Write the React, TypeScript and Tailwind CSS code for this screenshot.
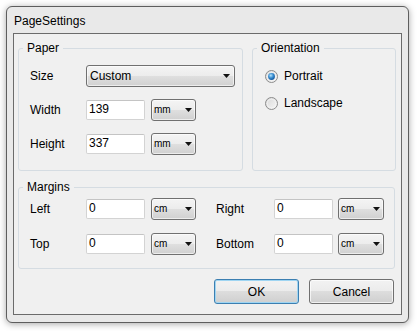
import React from "react";

function Arrow() {
  return (
    <svg width="7" height="4" viewBox="0 0 7 4" className="shrink-0">
      <path d="M0 0 L7 0 L3.5 4 Z" fill="#111" />
    </svg>
  );
}

function Combo({ text, w, small }: { text: string; w: string; small?: boolean }) {
  return (
    <div
      className={`${w} h-[22px] flex items-center justify-between border border-[#707070] rounded-[3px] bg-[linear-gradient(to_bottom,#f4f4f4_0%,#ececec_50%,#dfdfdf_50%,#d0d0d0_100%)] shadow-[inset_0_0_0_1px_rgba(255,255,255,0.6)] ${
        small ? "pl-[2px] pr-[3px] text-[10px]" : "pl-[3px] pr-[4px] text-[12px]"
      }`}
    >
      <span className="leading-[14px]">{text}</span>
      <Arrow />
    </div>
  );
}

function Field({ value }: { value: string }) {
  return (
    <div className="w-[59px] h-[20px] bg-white border border-[#d3d3d3] border-t-[#c4c4c4] rounded-[2px] pl-[2px] leading-[16px] text-[12px]">
      {value}
    </div>
  );
}

function Radio({ checked }: { checked?: boolean }) {
  return (
    <svg width="13" height="13" viewBox="0 0 13 13" className="shrink-0">
      <defs>
        <linearGradient id="rg" x1="0" y1="0" x2="1" y2="1">
          <stop offset="0" stopColor="#d6d6d6" />
          <stop offset="1" stopColor="#f8f8f8" />
        </linearGradient>
        <radialGradient id="bd" cx="0.4" cy="0.35" r="0.7">
          <stop offset="0" stopColor="#b9e4fb" />
          <stop offset="0.5" stopColor="#3a8fd2" />
          <stop offset="1" stopColor="#0d4f96" />
        </radialGradient>
      </defs>
      <circle cx="6.5" cy="6.5" r="6" fill="url(#rg)" stroke="#8c8c8c" strokeWidth="1" />
      <circle cx="6.5" cy="6.5" r="4.3" fill="none" stroke="#f4f4f4" strokeWidth="0.8" />
      {checked && <circle cx="6.5" cy="6.5" r="3.4" fill="url(#bd)" />}
    </svg>
  );
}

export default function App() {
  return (
    <div className="w-[419px] h-[331px] bg-white p-[6px] font-['Liberation_Sans',Arial,sans-serif] text-[12px] text-black">
      <div className="w-[403px] h-[317px] rounded-[6px] border border-[#5e5e5e] bg-[#e9e9e9] shadow-[0_1px_7px_rgba(0,0,0,0.35)] flex flex-col px-[6px] pb-[7px]">
        <div className="h-[26px] flex items-center pl-[1px] pt-[1px]">PageSettings</div>
        <div className="flex-1 border border-[#6b6b6b] bg-[#f0f0f0] flex flex-col pl-[4px] pt-[6px]">
          <div className="flex">
            <fieldset className="w-[225px] h-[131px] border border-[#d5dce2] rounded-[3px]">
              <legend className="ml-[4px] px-[4px] leading-[16px]">Paper</legend>
              <div className="pl-[11px] pt-[8px] flex flex-col gap-[10px]">
                <div className="h-[24px] flex items-center">
                  <span className="w-[56px]">Size</span>
                  <Combo text="Custom" w="w-[149px]" />
                </div>
                <div className="h-[24px] flex items-center">
                  <span className="w-[56px]">Width</span>
                  <Field value="139" />
                  <div className="ml-[6px]">
                    <Combo text="mm" w="w-[45px]" small />
                  </div>
                </div>
                <div className="h-[24px] flex items-center">
                  <span className="w-[56px]">Height</span>
                  <Field value="337" />
                  <div className="ml-[6px]">
                    <Combo text="mm" w="w-[45px]" small />
                  </div>
                </div>
              </div>
            </fieldset>
            <fieldset className="ml-[9px] w-[144px] h-[131px] border border-[#d5dce2] rounded-[3px]">
              <legend className="ml-[4px] px-[4px] leading-[16px]">Orientation</legend>
              <div className="pl-[12px] pt-[11px] flex flex-col gap-[9px]">
                <div className="h-[18px] flex items-center gap-[6px]">
                  <Radio checked />
                  <span>Portrait</span>
                </div>
                <div className="h-[18px] flex items-center gap-[6px]">
                  <Radio />
                  <span>Landscape</span>
                </div>
              </div>
            </fieldset>
          </div>
          <fieldset className="mt-[8px] w-[377px] h-[90px] border border-[#d5dce2] rounded-[3px]">
            <legend className="ml-[4px] px-[4px] leading-[16px]">Margins</legend>
            <div className="pl-[11px] pt-[1px] flex flex-col gap-[9px]">
              {[
                ["Left", "Right"],
                ["Top", "Bottom"],
              ].map(([a, b]) => (
                <div key={a} className="h-[26px] flex items-center">
                  <span className="w-[56px]">{a}</span>
                  <Field value="0" />
                  <div className="ml-[6px]">
                    <Combo text="cm" w="w-[45px]" small />
                  </div>
                  <span className="ml-[20px] w-[58px]">{b}</span>
                  <Field value="0" />
                  <div className="ml-[5px]">
                    <Combo text="cm" w="w-[46px]" small />
                  </div>
                </div>
              ))}
            </div>
          </fieldset>
          <div className="mt-[10px] flex justify-end pr-[7px]">
            <button className="w-[85px] h-[25px] rounded-[3px] border border-[#3c7fb1] shadow-[inset_0_0_0_1px_#9fd5f2] bg-[linear-gradient(to_bottom,#f2f2f2_0%,#ebebeb_50%,#dddddd_50%,#cfcfcf_100%)] flex items-center justify-center">
              OK
            </button>
            <button className="ml-[10px] w-[85px] h-[25px] rounded-[3px] border border-[#707070] shadow-[inset_0_0_0_1px_rgba(255,255,255,0.7)] bg-[linear-gradient(to_bottom,#f2f2f2_0%,#ebebeb_50%,#dddddd_50%,#cfcfcf_100%)] flex items-center justify-center">
              Cancel
            </button>
          </div>
        </div>
      </div>
    </div>
  );
}
